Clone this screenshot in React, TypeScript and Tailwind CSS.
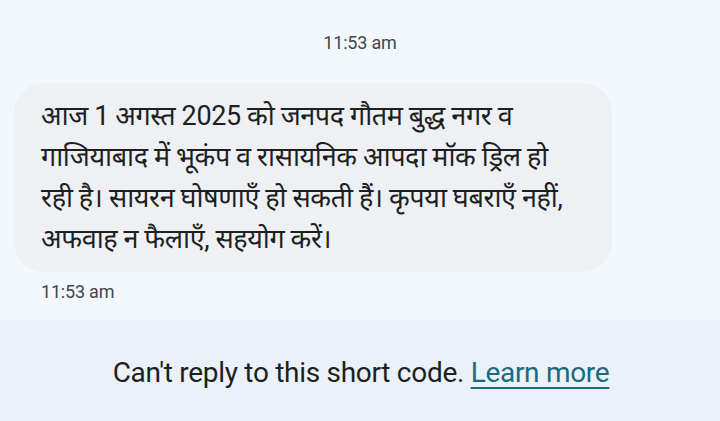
import React from 'react';

const LINES = [
  'आज 1 अगस्त 2025 को जनपद गौतम बुद्ध नगर व',
  'गाजियाबाद में भूकंप व रासायनिक आपदा मॉक ड्रिल हो',
  'रही है। सायरन घोषणाएँ हो सकती हैं। कृपया घबराएँ नहीं,',
  'अफवाह न फैलाएँ, सहयोग करें।',
];

const font = { fontFamily: 'Roboto, "Noto Sans", "Noto Sans Devanagari", sans-serif' };

export default function App() {
  return (
    <div className="w-[720px] h-[421px] flex flex-col bg-[#f3f8fc] text-[#1d1f22]" style={font}>
      <div className="flex-1 flex flex-col">
        <div className="pt-[32px] text-center text-[18px] text-[#44474b] leading-[22px] tracking-[-0.2px]">11:53 am</div>
        <div className="mt-[29px] ml-[14px] w-[598px] rounded-[30px] bg-[#eff0f3] pl-[27px] pr-[10px] pt-[13px] pb-[12px]">
          <p className="text-[27px] leading-[41px] tracking-[-0.4px] whitespace-nowrap">
            {LINES.map((l, i) => (
              <span key={i} className="block">{l}</span>
            ))}
          </p>
        </div>
        <div className="mt-[9px] ml-[41px] text-[18px] text-[#44474b] leading-[22px] tracking-[-0.2px]">11:53 am</div>
      </div>
      <div className="h-[101px] bg-[#eaf1f9] flex items-center justify-center pl-[2px] pt-[4px]">
        <p className="text-[28px] tracking-[-0.3px] text-[#1d1f22]">
          Can't reply to this short code.{' '}
          <span className="text-[#1b6a80] underline decoration-2 underline-offset-[5px]">Learn more</span>
        </p>
      </div>
    </div>
  );
}
